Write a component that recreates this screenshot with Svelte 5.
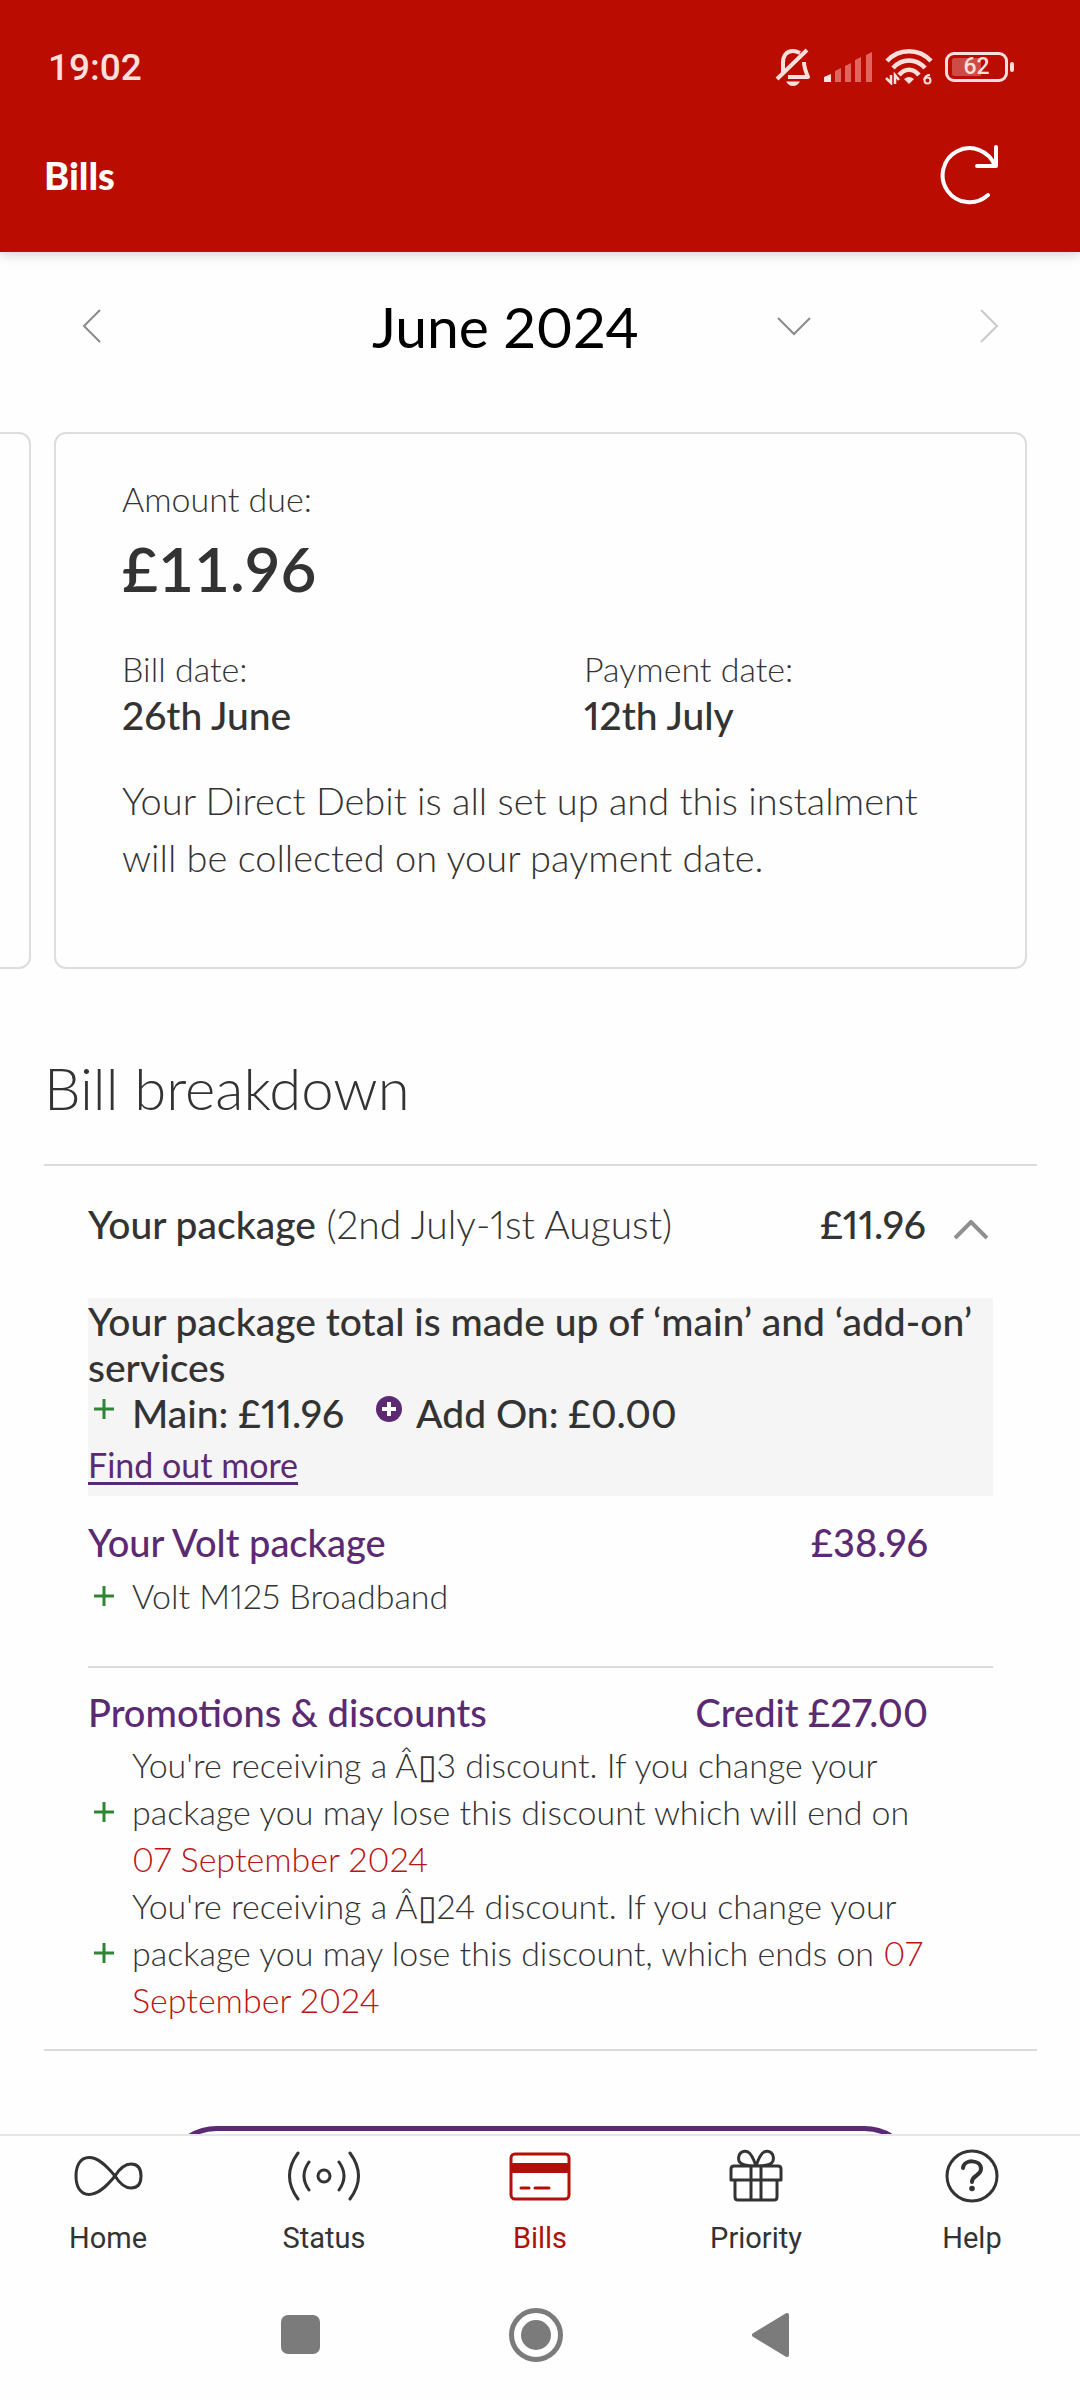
<script>
  const months = ['June 2024'];
  let month = $state('June 2024');
  let expanded = $state(true);

  const promotions = [
    {
      text: "You're receiving a Â▯3 discount. If you change your package you may lose this discount which will end on",
      date: '07 September 2024',
    },
    {
      text: "You're receiving a Â▯24 discount. If you change your package you may lose this discount, which ends on",
      date: '07 September 2024',
    },
  ];
</script>

{#snippet plus()}
  <svg class="plus" viewBox="0 0 20 20" width="20" height="20" aria-hidden="true">
    <path d="M10 0V20M0 10H20" />
  </svg>
{/snippet}

<div class="screen">
  <header class="top">
    <div class="status">
      <time>19:02</time>
      <div class="indicators">
        <svg class="bell" width="36" height="40" viewBox="0 0 36 40" aria-hidden="true">
          <path d="M8 25V16C8 9 11 4 18 4C21 4 23 5 25 6M29 15C29 20 30 23 33 30H13M2 32L32 3" fill="none" stroke="currentColor" stroke-width="4" stroke-linejoin="round" />
          <path d="M11 34.500H25C23 37.500 21 39 18 39S13 37.500 11 34.500Z" fill="currentColor" />
        </svg>
        <svg class="signal" width="50" height="32" viewBox="0 0 50 32" aria-hidden="true">
          <path d="M1 31V26L8 23V31Z" fill="#fde3df" />
          <path d="M12 31V20L18 17V31ZM22 31V15L28 12V31ZM32 31V9L38 6V31ZM43 31V4L49 1V31Z" fill="#e0655f" />
        </svg>
        <svg class="wifi" width="48" height="36" viewBox="0 0 48 36" aria-hidden="true">
          <g fill="none" stroke="currentColor" stroke-width="4.500">
            <path d="M2 12C14 -1 34 -1 46 12" />
            <path d="M8 19C17 9 31 9 40 19" />
            <path d="M14 26C20 19 28 19 34 26" />
          </g>
          <path d="M19 30Q24 26 29 30L24 35Z" fill="currentColor" />
          <path d="M6 26V34L1 29M10 35V26L14 31" fill="none" stroke="currentColor" stroke-width="2.500" />
          <path d="M45 26Q40 26 39 31" fill="none" stroke="currentColor" stroke-width="2" />
          <circle cx="42.500" cy="31.500" r="3" fill="none" stroke="currentColor" stroke-width="2" />
        </svg>
        <span class="battery"><span class="cell"><b>62</b></span></span>
      </div>
    </div>
    <div class="titlebar">
      <h1>Bills</h1>
      <button class="plain refresh" aria-label="Refresh">
        <svg width="62" height="62" viewBox="0 0 62 62" aria-hidden="true">
          <path d="M57 22A27 27 0 1 0 50 51M58 3V22H39" />
        </svg>
      </button>
    </div>
  </header>

  <main>
    <div class="months">
      <button class="plain" aria-label="Previous month">
        <svg class="thin" width="20" height="34" viewBox="0 0 20 34" aria-hidden="true"><path d="M18 1L2 17L18 33" /></svg>
      </button>
      <label class="picker">
        <select bind:value={month} aria-label="Bill month">
          {#each months as m}<option>{m}</option>{/each}
        </select>
        <svg class="thin" width="34" height="20" viewBox="0 0 34 20" aria-hidden="true"><path d="M1 2L17 18L33 2" /></svg>
      </label>
      <button class="plain faded" aria-label="Next month" disabled>
        <svg class="thin" width="20" height="34" viewBox="0 0 20 34" aria-hidden="true"><path d="M2 1L18 17L2 33" /></svg>
      </button>
    </div>

    <div class="carousel">
      <div class="card previous"></div>
      <section class="card">
        <p class="label">Amount due:</p>
        <p class="amount">£11.96</p>
        <dl class="dates">
          <div><dt>Bill date:</dt><dd>26th June</dd></div>
          <div><dt>Payment date:</dt><dd>12th July</dd></div>
        </dl>
        <p class="note">Your Direct Debit is all set up and this instalment will be collected on your payment date.</p>
      </section>
    </div>

    <section class="breakdown">
      <h2>Bill breakdown</h2>
      <div class="panel">
        <button class="plain summary" aria-expanded={expanded} onclick={() => (expanded = !expanded)}>
          <span class="name"><strong>Your package</strong> (2nd July-1st August)</span>
          <strong>£11.96</strong>
          <svg class="toggle" width="34" height="20" viewBox="0 0 34 20" aria-hidden="true"><path d="M1 18L17 2L33 18" /></svg>
        </button>
        {#if expanded}
          <div class="info">
            <p>Your package total is made up of ‘main’ and ‘add-on’ services</p>
            <p class="totals">
              {@render plus()}
              <span class="main-total">Main: £11.96</span>
              <svg class="disc" width="26" height="26" viewBox="0 0 26 26" aria-hidden="true">
                <circle cx="13" cy="13" r="13" /><path d="M13 6V20M6 13H20" />
              </svg>
              <span>Add On: £0.00</span>
            </p>
            <a href="#more">Find out more</a>
          </div>
          <div class="group">
            <h3><span>Your Volt package</span><span>£38.96</span></h3>
            <ul><li>{@render plus()}<span>Volt M125 Broadband</span></li></ul>
          </div>
          <div class="group promotions">
            <h3><span>Promotions &amp; discounts</span><span>Credit £27.00</span></h3>
            <ul>
              {#each promotions as p}
                <li>{@render plus()}<span>{p.text} <em>{p.date}</em></span></li>
              {/each}
            </ul>
          </div>
        {/if}
      </div>
      <button class="pill" aria-label="View full bill"></button>
    </section>
  </main>

  <nav class="tabs">
    <a href="#home">
      <svg width="72" height="56" viewBox="0 0 72 56" aria-hidden="true">
        <path d="M43 28C34 17 26 9.500 17 9.500C8 9.500 4 18 4 28S8 46.500 17 46.500C26 46.500 34 39 43 28C48 20 53 16 59 16C66 16 69 21 69 28S66 40 59 40C53 40 48 36 43 28Z" />
      </svg>
      Home
    </a>
    <a href="#status">
      <svg width="76" height="56" viewBox="0 0 76 56" aria-hidden="true">
        <circle cx="38" cy="28" r="6" />
        <path d="M23 14Q13 28 23 42M53 14Q63 28 53 42M12 5Q-5 28 12 51M64 5Q81 28 64 51" />
      </svg>
      Status
    </a>
    <a href="#bills" class="active" aria-current="page">
      <svg width="62" height="56" viewBox="0 0 62 56" aria-hidden="true">
        <rect x="2" y="6" width="58" height="45" rx="4" />
        <path d="M2 15H60V25H2Z" class="solid" />
        <path d="M12 40H20M26 40H40" />
      </svg>
      Bills
    </a>
    <a href="#priority">
      <svg width="54" height="56" viewBox="0 0 54 56" aria-hidden="true">
        <path d="M5 18H49Q52 18 52 21V32H2V21Q2 18 5 18ZM6 32V49Q6 52 9 52H45Q48 52 48 49V32M22 18V52M32 18V52M27 18C22 18 12 18 10 13C8 5 14 2 19 4C23 6 25 12 27 18C29 12 31 6 35 4C40 2 46 5 44 13C42 18 32 18 27 18" />
      </svg>
      Priority
    </a>
    <a href="#help">
      <svg width="56" height="56" viewBox="0 0 56 56" aria-hidden="true">
        <circle cx="28" cy="28" r="25" />
        <path d="M19 20C20 11 37 11 37 21C37 28 28 27 28 34" class="thick" />
        <circle cx="28" cy="40.500" r="2.800" class="dot" />
      </svg>
      Help
    </a>
  </nav>
  <div class="system">
    <button class="plain" aria-label="Recent apps">
      <svg width="54" height="54" viewBox="0 0 54 54" aria-hidden="true"><rect x="7" y="7" width="39" height="39" rx="7" /></svg>
    </button>
    <button class="plain" aria-label="Home screen">
      <svg width="54" height="54" viewBox="0 0 54 54" aria-hidden="true">
        <circle cx="27" cy="27" r="24.500" fill="none" stroke="#7b7b7b" stroke-width="5" /><circle cx="27" cy="27" r="15" />
      </svg>
    </button>
    <button class="plain" aria-label="Back">
      <svg width="54" height="54" viewBox="0 0 54 54" aria-hidden="true"><path d="M10 27L43 7V47Z" stroke="#7b7b7b" stroke-width="4" stroke-linejoin="round" /></svg>
    </button>
  </div>
</div>

<style>
  :global(body) { margin: 0; background: #fefefe; }
  .screen {
    display: flex;
    flex-direction: column;
    height: 100vh;
    color: #333;
    font-family: Lato, "Open Sans", sans-serif;
    font-size: 39px;
    line-height: 47px;
    font-variant-numeric: proportional-nums;
    background: #fefefe;
  }
  h1, h2, h3, p, dl, dd, ul { margin: 0; padding: 0; }
  svg { display: block; flex: none; }
  .plain { padding: 0; border: 0; background: none; color: inherit; font: inherit; }

  .top {
    position: relative;
    flex: none;
    background: #ba0c00;
    color: #fff;
    box-shadow: 0 2px 12px rgba(0, 0, 0, 0.2);
  }
  .status {
    display: flex;
    align-items: center;
    justify-content: space-between;
    height: 102px;
    padding: 32px 66px 0 48px;
    box-sizing: border-box;
    color: #ffdfdb;
    font-family: Roboto, sans-serif;
    font-weight: 500;
    font-variant-numeric: normal;
  }
  time { font-size: 37px; }
  .indicators { display: flex; align-items: center; gap: 12px; }
  .battery { display: flex; align-items: center; }
  .battery::after { content: ""; width: 4px; height: 10px; margin-left: 2px; border-radius: 2px; background: #ffdfdb; }
  .cell {
    display: flex;
    align-items: center;
    justify-content: center;
    width: 63px;
    height: 30px;
    border: 3px solid #ffdfdb;
    border-radius: 9px;
    box-sizing: border-box;
    background: linear-gradient(90deg, #cd4c45 60%, transparent 60%) content-box;
    padding: 3px 4px;
    font-size: 23px;
    line-height: 18px;
  }
  .cell b { font-weight: 500; }
  .titlebar { display: flex; align-items: center; justify-content: space-between; height: 146px; padding: 0 80px 4px 44px; }
  h1 { font-size: 38px; font-weight: 900; }
  .refresh path { fill: none; stroke: #fff; stroke-width: 4; stroke-linecap: round; stroke-linejoin: round; }

  main { flex: 1; min-height: 0; overflow-y: auto; scrollbar-width: none; }
  .months { display: flex; align-items: center; height: 148px; padding: 0 81px 0 82px; }
  .picker { display: flex; align-items: center; gap: 137px; margin: 0 168px 0 auto; }
  select { appearance: none; padding: 0; border: 0; background: none; color: #000; font: inherit; font-size: 57px; line-height: 64px; }
  .thin { fill: none; stroke: #8a8a8a; stroke-width: 2; }
  .faded { opacity: 0.45; }

  .carousel { display: flex; gap: 23px; margin-top: 32px; padding-right: 53px; }
  .card { flex: 1; padding: 42px 66px 81px; border: 2px solid #ddd; border-radius: 12px; }
  .previous { flex: none; width: 29px; padding: 0; border-left: 0; border-radius: 0 12px 12px 0; }
  .label, dt { font-size: 34px; line-height: 46px; font-weight: 300; }
  .amount { font-size: 62px; line-height: 92px; font-weight: 600; font-variant-numeric: tabular-nums; }
  .dates { display: grid; grid-template-columns: 462px 1fr; margin-top: 32px; }
  dd { font-weight: 500; }
  .note { margin-top: 33px; font-size: 38px; line-height: 57px; font-weight: 300; }

  .breakdown { padding: 0 43px 0 44px; }
  h2 { margin-top: 83px; font-size: 58px; line-height: 72px; font-weight: 300; }
  .panel { margin-top: 40px; padding: 35px 44px 26px; border-top: 2px solid #dadada; border-bottom: 2px solid #dadada; }
  .summary { display: flex; align-items: center; width: 100%; text-align: left; font-weight: 300; }
  .name { flex: 1; }
  strong { font-weight: 500; }
  .toggle { margin: 10px 5px 0 28px; fill: none; stroke: #8f8f8f; stroke-width: 4; }
  .info { margin-top: 50px; padding-bottom: 3px; background: #f5f5f5; font-weight: 500; line-height: 46px; }
  .totals { display: flex; align-items: center; }
  .plus { margin: 0 18px 0 6px; fill: none; stroke: #2e8534; stroke-width: 3; }
  .main-total { margin-right: 32px; }
  .disc { margin-right: 14px; fill: #5b2a73; }
  .disc path { stroke: #fff; stroke-width: 4; }
  .totals svg, .totals :global(.plus) { margin-bottom: 8px; }
  .info a { display: inline-block; color: #5b2a73; font-size: 34px; line-height: 57px; font-weight: 400; text-underline-offset: 4px; }
  .group { padding-top: 20px; }
  .group h3 { display: flex; justify-content: space-between; margin-bottom: 4px; padding-right: 65px; color: #5b2a73; font-size: 38px; line-height: 52px; font-weight: 500; }
  .group ul { padding-right: 65px; list-style: none; font-size: 34px; font-weight: 300; }
  .group li { display: flex; align-items: center; }
  em { color: #bb1414; font-style: normal; }
  .promotions { margin-top: 47px; padding-top: 18px; border-top: 2px solid #dadada; }
  .promotions h3 { margin-bottom: 3px; }
  .pill { display: block; width: calc(100% - 238px); height: 108px; margin: 75px auto 40px; border: 5px solid #5b2a73; border-radius: 54px; background: #fff; }

  .tabs { position: relative; display: grid; grid-template-columns: repeat(5, 1fr); flex: none; border-top: 2px solid #e6e6e6; background: #fefefe; }
  .tabs a { display: flex; flex-direction: column; align-items: center; gap: 16px; padding: 12px 0 19px; color: #333; font-family: Roboto, sans-serif; font-size: 29px; line-height: 36px; text-decoration: none; }
  .tabs svg { fill: none; stroke: currentColor; stroke-width: 3; stroke-linejoin: round; stroke-linecap: round; }
  .tabs .active { color: #b01008; }
  .tabs .solid { fill: currentColor; stroke: none; }
  .tabs .thick { stroke-width: 4; }
  .tabs .dot { fill: currentColor; stroke: none; }
  .system { display: flex; align-items: center; justify-content: center; gap: 181px; flex: none; height: 120px; padding: 0 9px 5px 0; fill: #7b7b7b; }
</style>
